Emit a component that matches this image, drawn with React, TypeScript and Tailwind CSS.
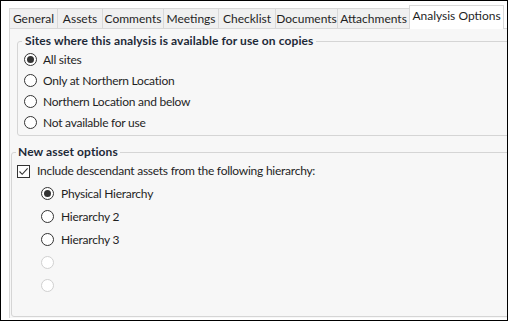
import React from "react";

const tabs = [
  { label: "General", w: "w-[48px]" },
  { label: "Assets", w: "w-[45px]" },
  { label: "Comments", w: "w-[61px]" },
  { label: "Meetings", w: "w-[55px]" },
  { label: "Checklist", w: "w-[57px]" },
  { label: "Documents", w: "w-[62px]" },
  { label: "Attachments", w: "w-[72px]" },
];

const sites = ["All sites", "Only at Northern Location", "Northern Location and below", "Not available for use"];
const hierarchies = ["Physical Hierarchy", "Hierarchy 2", "Hierarchy 3", "", ""];

function Radio({ checked, disabled }: { checked?: boolean; disabled?: boolean }) {
  return (
    <span
      className={`flex h-[13px] w-[13px] shrink-0 items-center justify-center rounded-full border bg-white ${
        disabled ? "border-[#d0d0d0]" : "border-[#333333]"
      }`}
    >
      {checked && <span className="h-[7px] w-[7px] rounded-full bg-[#333333]" />}
    </span>
  );
}

function Checkbox() {
  return (
    <span className="flex h-[13px] w-[13px] shrink-0 items-center justify-center border border-[#333333] bg-white">
      <svg width="11" height="11" viewBox="0 0 11 11">
        <path d="M1.5 5.5 L4.2 8.3 L9.6 2.4" fill="none" stroke="#333333" strokeWidth="1.1" />
      </svg>
    </span>
  );
}

export default function App() {
  return (
    <div className="h-[321px] w-[508px] overflow-hidden border border-black bg-white font-['Lato',sans-serif] text-[12px] tracking-[-0.25px] text-[#1f1f1f]">
      {/* Tab strip */}
      <div className="flex h-[27px] items-end pl-[8px] pt-[4px]">
        {tabs.map((t) => (
          <div
            key={t.label}
            className={`${t.w} flex h-[20px] items-center justify-center whitespace-nowrap border-t border-l border-[#d9d9d9] bg-[#f0f0f0] leading-none tracking-normal`}
          >
            {t.label}
          </div>
        ))}
        <div className="relative z-10 -mb-px flex h-[24px] w-[95px] items-center justify-center whitespace-nowrap border-x border-t border-[#d9d9d9] bg-white pb-[3px] leading-none tracking-normal">
          Analysis Options
        </div>
      </div>

      {/* Panel */}
      <div className="ml-[8px] h-[290px] w-[520px] border-l border-t border-[#d9d9d9] bg-[#f7f7f7] pt-[4px]">
        <fieldset className="ml-[7px] w-[520px] rounded-[3px] border border-[#d5d5d5] pb-[2px]">
          <legend className="ml-[4px] px-[3px] text-[12px] leading-[16px] font-bold tracking-[0.1px] text-[#1e2a38]">
            Sites where this analysis is available for use on copies
          </legend>
          {sites.map((s, i) => (
            <div key={s} className="flex h-[21px] items-center gap-[6px] pl-[6px]">
              <Radio checked={i === 0} />
              <span>{s}</span>
            </div>
          ))}
        </fieldset>

        <fieldset className="ml-[1px] mt-[8px] w-[520px] rounded-[3px] border border-[#d5d5d5] pb-[19px]">
          <legend className="ml-[4px] px-[2px] text-[12px] leading-[16px] font-bold tracking-[0.1px] text-[#1e2a38]">
            New asset options
          </legend>
          <div className="flex h-[22px] items-center gap-[7px] pl-[5px]">
            <Checkbox />
            <span>Include descendant assets from the following hierarchy:</span>
          </div>
          {hierarchies.map((h, i) => (
            <div key={i} className="flex h-[23px] items-center gap-[7px] pl-[29px]">
              <Radio checked={i === 0} disabled={h === ""} />
              {h && <span>{h}</span>}
            </div>
          ))}
        </fieldset>
      </div>
    </div>
  );
}
